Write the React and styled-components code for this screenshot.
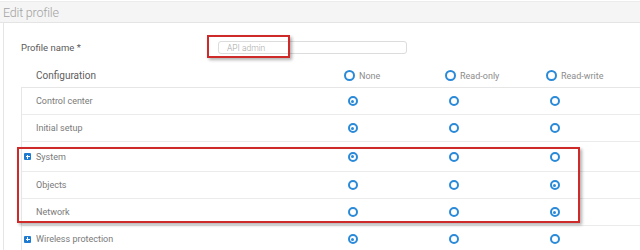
import React from 'react';
import styled, { createGlobalStyle } from 'styled-components';

const GlobalStyle = createGlobalStyle`
  html, body {
    margin: 0;
    padding: 0;
    background: #ffffff;
    overflow: hidden;
  }
  body {
    font-family: 'Roboto', 'Liberation Sans', sans-serif;
  }
`;

const Page = styled.div`
  position: relative;
  width: 640px;
  height: 250px;
  overflow: hidden;
  background: #fff;
`;

const TitleBar = styled.div`
  height: 20px;
  margin-top: 1px;
  border-top: 1px solid #ececec;
  border-bottom: 1px solid #e4e4e4;
  background: #f5f5f5;
  display: flex;
  align-items: center;
  padding-left: 3px;
  color: #a2a2a2;
  font-size: 12.5px;
  font-weight: 300;
  letter-spacing: -0.2px;
`;

const Panel = styled.div`
  margin-left: 3px;
  border-left: 1px solid #e6e6e6;
  padding-left: 17px;
  height: 227px;
`;

const FieldRow = styled.div`
  display: grid;
  grid-template-columns: 197px 189px;
  align-items: center;
  padding-top: 18px;
`;

const FieldLabel = styled.label`
  font-size: 9.5px;
  color: #5a5a5a;
`;

const TextInput = styled.div`
  box-sizing: border-box;
  height: 13px;
  border: 1px solid #dcdcdc;
  border-radius: 3px;
  padding-left: 8px;
  font-size: 8.5px;
  font-weight: 300;
  color: #a8a8a8;
  display: flex;
  align-items: center;
`;

const Table = styled.div`
  margin-top: 10px;
`;

const COLS = '280px 101px 101px 101px 1fr';

const HeadRow = styled.div`
  display: grid;
  grid-template-columns: ${COLS};
  height: 23px;
  align-items: center;
  border-bottom: 1px solid #e6e6e6;
`;

const HeadTitle = styled.div`
  padding-left: 15px;
  font-size: 10px;
  color: #5e5e5e;
`;

const HeadOption = styled.div`
  display: flex;
  align-items: center;
  gap: 4px;
  padding-left: 43px;
  font-size: 9px;
  color: #8c8c8c;
`;

const Body = styled.div`
  border-left: 1px solid #e6e6e6;
`;

const Row = styled.div`
  display: grid;
  grid-template-columns: ${COLS};
  align-items: center;
  height: ${p => p.$h || 26}px;
  border-bottom: 1px solid #ebebeb;
`;

const RowLabel = styled.div`
  display: flex;
  align-items: center;
  gap: 5px;
  padding-left: 2px;
  font-size: 9px;
  color: #7a7a7a;
`;

const Expand = styled.span`
  position: relative;
  width: 7px;
  height: 7px;
  border-radius: 1px;
  background: ${p => (p.$hidden ? 'transparent' : '#1e7bd3')};
  &::before, &::after {
    content: '';
    display: ${p => (p.$hidden ? 'none' : 'block')};
    position: absolute;
    background: #fff;
  }
  &::before { left: 1.5px; top: 3px; width: 4px; height: 1px; }
  &::after { left: 3px; top: 1.5px; width: 1px; height: 4px; }
`;

const Cell = styled.div`
  display: flex;
  justify-content: center;
`;

const Radio = styled.span`
  position: relative;
  box-sizing: border-box;
  width: ${p => p.$size || 10}px;
  height: ${p => p.$size || 10}px;
  border: 2px solid #2b8ad8;
  border-radius: 50%;
  flex-shrink: 0;
  &::after {
    content: '';
    display: ${p => (p.$checked ? 'block' : 'none')};
    position: absolute;
    left: 50%;
    top: 50%;
    width: 3px;
    height: 3px;
    margin: -1.5px 0 0 -1.5px;
    border-radius: 50%;
    background: #2b8ad8;
  }
`;

const Highlight = styled.div`
  position: absolute;
  box-sizing: border-box;
  border: 2px solid #cf2a2a;
  box-shadow: 2px 2px 3px rgba(0, 0, 0, 0.3);
  pointer-events: none;
`;

const rows = [
  { name: 'Control center', value: 0 },
  { name: 'Initial setup', value: 0 },
  { name: 'System', value: 0, group: true, h: 29 },
  { name: 'Objects', value: 2 },
  { name: 'Network', value: 2 },
  { name: 'Wireless protection', value: 0, group: true },
];

const options = ['None', 'Read-only', 'Read-write'];

const App = () => {
  return (
    <Page>
      <GlobalStyle />
      <TitleBar>Edit profile</TitleBar>
      <Panel>
        <FieldRow>
          <FieldLabel>Profile name *</FieldLabel>
          <TextInput>API admin</TextInput>
        </FieldRow>
        <Table>
          <HeadRow>
            <HeadTitle>Configuration</HeadTitle>
            {options.map(o => (
              <HeadOption key={o}>
                <Radio $size={11} />
                {o}
              </HeadOption>
            ))}
          </HeadRow>
          <Body>
            {rows.map(r => (
              <Row key={r.name} $h={r.h}>
                <RowLabel>
                  <Expand $hidden={!r.group} />
                  {r.name}
                </RowLabel>
                {options.map((o, i) => (
                  <Cell key={o}>
                    <Radio $checked={r.value === i} />
                  </Cell>
                ))}
              </Row>
            ))}
          </Body>
        </Table>
      </Panel>
      <Highlight style={{ left: 207, top: 35, width: 83, height: 23 }} />
      <Highlight style={{ left: 17, top: 147, width: 563, height: 76 }} />
    </Page>
  );
};

export default App;
